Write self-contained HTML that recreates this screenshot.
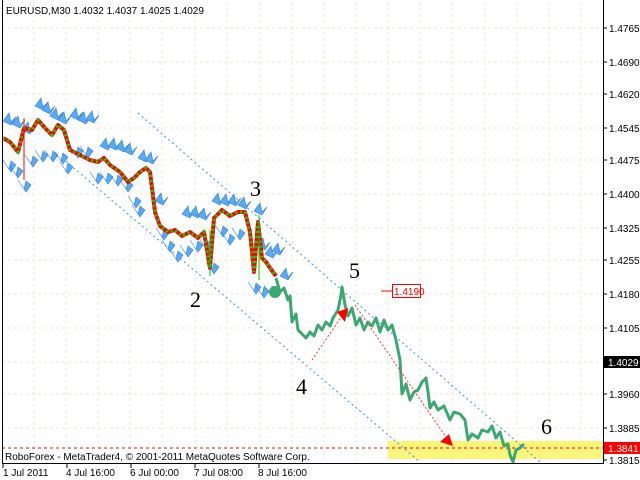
<!DOCTYPE html>
<html><head><meta charset="utf-8"><style>
html,body{margin:0;padding:0;background:#fff;width:640px;height:480px;overflow:hidden}
svg{display:block}
text{font-family:"Liberation Sans",sans-serif;font-size:10px;fill:#000}
.n{font-family:"Liberation Serif",serif;font-size:22px}
</style></head><body>
<svg width="640" height="480" viewBox="0 0 640 480" xmlns="http://www.w3.org/2000/svg">
<defs>
<g id="f"><path d="M0,8 L6,0 L8,9 L13,4 L8,12 Z" fill="#5aaaf2" stroke="#2f7fe0" stroke-width="0.6"/></g>
<g id="d"><path d="M0,0 L6,9 L8,1 L13,5 L8,12 Z" fill="#5aaaf2" stroke="#2f7fe0" stroke-width="0.6"/></g>
</defs>
<rect x="0" y="0" width="640" height="480" fill="#fff"/>
<g stroke="#ecead0" stroke-dasharray="3,3" stroke-width="1">
<line x1="2" x2="603" y1="28" y2="28"/><line x1="2" x2="603" y1="62" y2="62"/><line x1="2" x2="603" y1="94" y2="94"/><line x1="2" x2="603" y1="128" y2="128"/><line x1="2" x2="603" y1="160" y2="160"/><line x1="2" x2="603" y1="194" y2="194"/><line x1="2" x2="603" y1="228" y2="228"/><line x1="2" x2="603" y1="260" y2="260"/><line x1="2" x2="603" y1="294" y2="294"/><line x1="2" x2="603" y1="328" y2="328"/><line x1="2" x2="603" y1="362" y2="362"/><line x1="2" x2="603" y1="394" y2="394"/><line x1="2" x2="603" y1="428" y2="428"/>
<line y1="2" y2="463" x1="34" x2="34"/><line y1="2" y2="463" x1="66" x2="66"/><line y1="2" y2="463" x1="98" x2="98"/><line y1="2" y2="463" x1="130" x2="130"/><line y1="2" y2="463" x1="162" x2="162"/><line y1="2" y2="463" x1="195" x2="195"/><line y1="2" y2="463" x1="227" x2="227"/><line y1="2" y2="463" x1="260" x2="260"/><line y1="2" y2="463" x1="292" x2="292"/><line y1="2" y2="463" x1="324" x2="324"/><line y1="2" y2="463" x1="356" x2="356"/><line y1="2" y2="463" x1="388" x2="388"/><line y1="2" y2="463" x1="420" x2="420"/><line y1="2" y2="463" x1="452" x2="452"/><line y1="2" y2="463" x1="485" x2="485"/><line y1="2" y2="463" x1="517" x2="517"/><line y1="2" y2="463" x1="549" x2="549"/><line y1="2" y2="463" x1="581" x2="581"/>
</g>
<rect x="388" y="441" width="215" height="18" fill="#fbf57a"/>
<line x1="2" y1="448" x2="603" y2="448" stroke="#f00" stroke-dasharray="3,3"/>
<g stroke="#3a8ff0" stroke-dasharray="2,3" fill="none">
<line x1="138" y1="113" x2="540" y2="462"/>
<line x1="62" y1="158" x2="420" y2="462"/>
</g>
<g>
<use href="#f" x="3" y="113"/><use href="#f" x="12" y="116"/><use href="#f" x="22" y="122"/><use href="#f" x="35" y="98"/><use href="#f" x="42" y="102"/><use href="#f" x="50" y="108"/><use href="#f" x="58" y="112"/><use href="#f" x="70" y="108"/><use href="#f" x="78" y="112"/><use href="#f" x="86" y="111"/><use href="#f" x="100" y="138"/><use href="#f" x="108" y="138"/><use href="#f" x="116" y="140"/><use href="#f" x="124" y="143"/><use href="#f" x="138" y="150"/><use href="#f" x="145" y="152"/><use href="#f" x="155" y="193"/><use href="#f" x="182" y="206"/><use href="#f" x="190" y="206"/><use href="#f" x="198" y="208"/><use href="#f" x="212" y="193"/><use href="#f" x="220" y="194"/><use href="#f" x="228" y="194"/><use href="#f" x="238" y="197"/><use href="#f" x="254" y="203"/><use href="#f" x="257" y="238"/><use href="#f" x="265" y="246"/><use href="#f" x="272" y="243"/><use href="#f" x="280" y="268"/>
<use href="#d" x="3" y="160"/><use href="#d" x="10" y="166"/><use href="#d" x="18" y="180"/><use href="#d" x="25" y="155"/><use href="#d" x="35" y="150"/><use href="#d" x="45" y="150"/><use href="#d" x="55" y="152"/><use href="#d" x="60" y="162"/><use href="#d" x="70" y="146"/><use href="#d" x="80" y="146"/><use href="#d" x="90" y="172"/><use href="#d" x="100" y="172"/><use href="#d" x="110" y="174"/><use href="#d" x="120" y="180"/><use href="#d" x="128" y="196"/><use href="#d" x="132" y="205"/><use href="#d" x="156" y="228"/><use href="#d" x="162" y="240"/><use href="#d" x="170" y="250"/><use href="#d" x="180" y="245"/><use href="#d" x="190" y="240"/><use href="#d" x="200" y="240"/><use href="#d" x="206" y="262"/><use href="#d" x="215" y="225"/><use href="#d" x="222" y="233"/><use href="#d" x="232" y="228"/><use href="#d" x="248" y="282"/><use href="#d" x="256" y="286"/><use href="#d" x="264" y="285"/>
</g>
<polyline fill="none" stroke="#f00" stroke-width="4" stroke-linejoin="round" points="3,138 10,142 18,152 24,128 32,130 38,120 45,128 52,135 58,125 64,130 70,150 80,155 90,160 98,162 104,158 110,165 120,172 128,182 134,178 140,172 146,168 150,172 155,212 160,226 168,232 175,230 182,236 190,232 198,238 204,232 210,268 214,218 222,210 230,216 238,212 245,212 250,232 254,272 258,222 262,258 266,262 270,268 276,276"/>
<polyline fill="none" stroke="#0d0" stroke-width="3" stroke-dasharray="2,3" points="3,138 10,142 18,152 24,128 32,130 38,120 45,128 52,135 58,125 64,130 70,150 80,155 90,160 98,162 104,158 110,165 120,172 128,182 134,178 140,172 146,168 150,172 155,212 160,226 168,232 175,230 182,236 190,232 198,238 204,232 210,268 214,218 222,210 230,216 238,212 245,212 250,232 254,272 258,222 262,258 266,262 270,268 276,276"/>
<line x1="24" y1="118" x2="24" y2="180" stroke="#f00"/><line x1="210" y1="230" x2="210" y2="276" stroke="#0c0"/><line x1="259" y1="215" x2="259" y2="280" stroke="#0c0"/>
<circle cx="275" cy="292" r="6" fill="#3aa870"/>
<polyline fill="none" stroke="#3aa870" stroke-width="3" stroke-linejoin="round" points="276,278 280,292 284,288 288,300 290,296 292,322 296,314 298,330 302,334 306,338 310,332 314,336 318,325 322,330 326,322 330,326 333,318 338,310 341,295 342,287 345,305 348,316 352,308 356,325 360,318 364,330 368,322 372,326 376,318 380,332 384,320 388,330 392,325 396,340 400,360 402,394 406,384 410,400 414,392 418,390 422,382 426,378 428,392 430,408 434,402 438,410 444,406 450,420 454,412 460,414 465,420 468,440 472,434 478,438 482,430 488,432 492,426 496,438 500,432 504,446 508,444 510,455 513,462 516,450 520,448 524,444"/>
<g stroke="#f33" stroke-dasharray="2,2" fill="none"><line x1="312" y1="360" x2="344" y2="313"/><line x1="355" y1="305" x2="448" y2="440"/></g>
<path d="M348,308 L337,312 L345,322 Z" fill="#f00"/>
<path d="M453,446 L440,442 L449,434 Z" fill="#f00"/>
<text class="n" x="250" y="196">3</text><text class="n" x="190" y="307">2</text><text class="n" x="296" y="394">4</text><text class="n" x="349" y="278">5</text><text class="n" x="541" y="434">6</text>
<line x1="381" y1="291" x2="392" y2="291" stroke="#f00"/>
<rect x="392.5" y="284.5" width="28" height="13" fill="#fff" stroke="#f00"/>
<text x="394" y="295" style="fill:#f00">1.4190</text>
<rect x="2" y="450" width="311" height="12" fill="#fff"/>
<text x="5" y="460">RoboForex - MetaTrader4, © 2001-2011 MetaQuotes Software Corp.</text>
<text x="6" y="14">EURUSD,M30  1.4032 1.4037 1.4025 1.4029</text>
<g stroke="#000" fill="none"><line x1="2.5" y1="0" x2="2.5" y2="463.5"/><line x1="2" y1="463.5" x2="604" y2="463.5"/><line x1="603.5" y1="0" x2="603.5" y2="464"/></g>
<g stroke="#000"><line x1="3" y1="464" x2="3" y2="468"/><line x1="67" y1="464" x2="67" y2="468"/><line x1="131" y1="464" x2="131" y2="468"/><line x1="195" y1="464" x2="195" y2="468"/><line x1="259" y1="464" x2="259" y2="468"/>
<line x1="604" y1="28" x2="607" y2="28"/><line x1="604" y1="62" x2="607" y2="62"/><line x1="604" y1="94" x2="607" y2="94"/><line x1="604" y1="128" x2="607" y2="128"/><line x1="604" y1="160" x2="607" y2="160"/><line x1="604" y1="194" x2="607" y2="194"/><line x1="604" y1="228" x2="607" y2="228"/><line x1="604" y1="260" x2="607" y2="260"/><line x1="604" y1="294" x2="607" y2="294"/><line x1="604" y1="328" x2="607" y2="328"/><line x1="604" y1="394" x2="607" y2="394"/><line x1="604" y1="428" x2="607" y2="428"/><line x1="604" y1="460" x2="607" y2="460"/></g>
<g>
<text x="609" y="32">1.4765</text><text x="609" y="66">1.4690</text><text x="609" y="98">1.4620</text><text x="609" y="132">1.4545</text><text x="609" y="164">1.4475</text><text x="609" y="198">1.4400</text><text x="609" y="232">1.4325</text><text x="609" y="264">1.4255</text><text x="609" y="298">1.4180</text><text x="609" y="332">1.4105</text><text x="609" y="398">1.3960</text><text x="609" y="432">1.3885</text><text x="609" y="464">1.3815</text>
</g>
<rect x="604" y="356" width="36" height="12" fill="#000"/><text x="608" y="366" style="fill:#fff">1.4029</text>
<rect x="604" y="442" width="36" height="12" fill="#f00"/><text x="608" y="452" style="fill:#fff">1.3841</text>
<text x="3" y="476">1 Jul 2011</text><text x="66" y="476">4 Jul 16:00</text><text x="130" y="476">6 Jul 00:00</text><text x="194" y="476">7 Jul 08:00</text><text x="258" y="476">8 Jul 16:00</text>
</svg>
</body></html>
